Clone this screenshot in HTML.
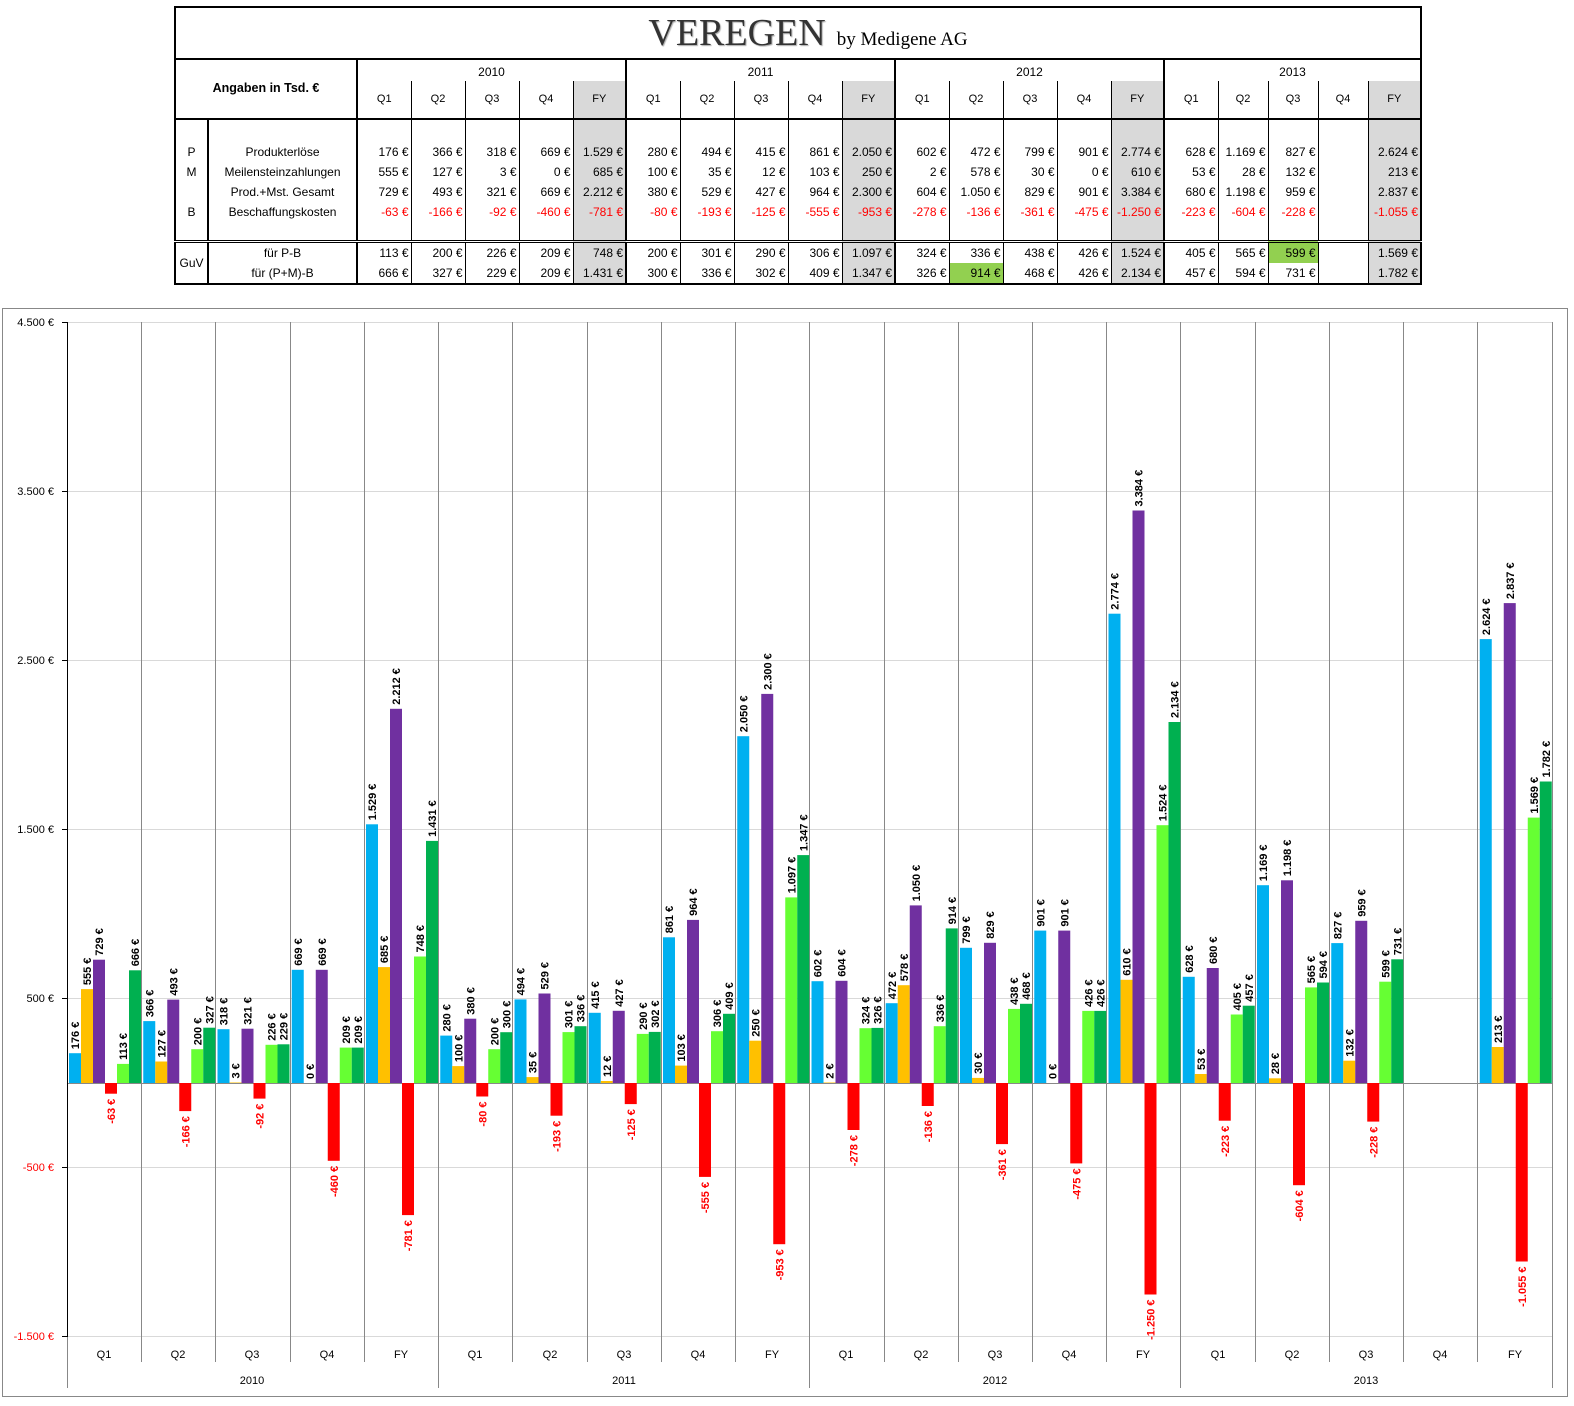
<!DOCTYPE html>
<html><head><meta charset="utf-8"><style>
html,body{margin:0;width:1574px;height:1406px;overflow:hidden}
body{background:#fff;position:relative;font-family:"Liberation Sans",Arial,sans-serif}
svg{position:absolute;left:0;top:0}
.c1{fill:#00b0f0}.c2{fill:#ffc000}.c3{fill:#7030a0}.c4{fill:#ff0000}.c5{fill:#66ff33}.c6{fill:#00b050}
text{font-family:"Liberation Sans",Arial,sans-serif}
.l{font-size:11px;font-weight:bold;fill:#000}
.n{font-size:11px;font-weight:bold;fill:#ff0000;text-anchor:end}
.ax{font-size:11px;text-anchor:end}
.ct{font-size:11px;text-anchor:middle}
table{position:absolute;left:174px;top:6px;border-collapse:collapse;table-layout:fixed;font-size:12px}
td{border:1px solid #000;padding:0;}
.t{border:2px solid #000}
.d{text-align:right;padding-right:2px;line-height:20px;vertical-align:top;padding-top:22px}
.g{background:#d9d9d9}
.r{color:#ff0000}
.q{font-size:11px;text-align:center;vertical-align:middle;padding-bottom:2px}
.yb{border-left:2px solid #000}
.hl{background:#92d050}
.gu td{line-height:20px}
</style></head><body>
<svg width="1574" height="1406">
<rect x="2.5" y="308.5" width="1565" height="1088" fill="#fff" stroke="#888"/>
<g stroke="#d9d9d9" stroke-width="1">
<line x1="67" y1="322.5" x2="1552" y2="322.5"/><line x1="67" y1="491.5" x2="1552" y2="491.5"/><line x1="67" y1="660.5" x2="1552" y2="660.5"/><line x1="67" y1="829.5" x2="1552" y2="829.5"/><line x1="67" y1="998.5" x2="1552" y2="998.5"/><line x1="67" y1="1167.5" x2="1552" y2="1167.5"/><line x1="67" y1="1336.5" x2="1552" y2="1336.5"/>
</g>
<g stroke="#888" stroke-width="1">
<line x1="141.5" y1="322" x2="141.5" y2="1362"/><line x1="215.5" y1="322" x2="215.5" y2="1362"/><line x1="290.5" y1="322" x2="290.5" y2="1362"/><line x1="364.5" y1="322" x2="364.5" y2="1362"/><line x1="438.5" y1="322" x2="438.5" y2="1388"/>
<line x1="512.5" y1="322" x2="512.5" y2="1362"/><line x1="587.5" y1="322" x2="587.5" y2="1362"/><line x1="661.5" y1="322" x2="661.5" y2="1362"/><line x1="735.5" y1="322" x2="735.5" y2="1362"/><line x1="809.5" y1="322" x2="809.5" y2="1388"/>
<line x1="884.5" y1="322" x2="884.5" y2="1362"/><line x1="958.5" y1="322" x2="958.5" y2="1362"/><line x1="1032.5" y1="322" x2="1032.5" y2="1362"/><line x1="1106.5" y1="322" x2="1106.5" y2="1362"/><line x1="1180.5" y1="322" x2="1180.5" y2="1388"/>
<line x1="1255.5" y1="322" x2="1255.5" y2="1362"/><line x1="1329.5" y1="322" x2="1329.5" y2="1362"/><line x1="1403.5" y1="322" x2="1403.5" y2="1362"/><line x1="1477.5" y1="322" x2="1477.5" y2="1362"/><line x1="1552.5" y1="322" x2="1552.5" y2="1388"/>
<line x1="67.5" y1="1337" x2="67.5" y2="1388"/>
<line x1="67" y1="1083.5" x2="1552" y2="1083.5"/>
</g>
<g stroke="#000"><line x1="67.5" y1="322" x2="67.5" y2="1337"/>
<line x1="62" y1="322.5" x2="67" y2="322.5"/><line x1="62" y1="491.5" x2="67" y2="491.5"/><line x1="62" y1="660.5" x2="67" y2="660.5"/><line x1="62" y1="829.5" x2="67" y2="829.5"/><line x1="62" y1="998.5" x2="67" y2="998.5"/><line x1="62" y1="1167.5" x2="67" y2="1167.5"/><line x1="62" y1="1336.5" x2="67" y2="1336.5"/></g>
<text class="ax" x="54" y="326">4.500 €</text><text class="ax" x="54" y="495">3.500 €</text><text class="ax" x="54" y="664">2.500 €</text><text class="ax" x="54" y="833">1.500 €</text><text class="ax" x="54" y="1002">500 €</text><text class="ax" x="54" y="1171" fill="#f00">-500 €</text><text class="ax" x="54" y="1340" fill="#f00">-1.500 €</text>
<g class="ct">
<text class="ct" x="104" y="1358">Q1</text><text class="ct" x="178" y="1358">Q2</text><text class="ct" x="252" y="1358">Q3</text><text class="ct" x="327" y="1358">Q4</text><text class="ct" x="401" y="1358">FY</text>
<text class="ct" x="475" y="1358">Q1</text><text class="ct" x="550" y="1358">Q2</text><text class="ct" x="624" y="1358">Q3</text><text class="ct" x="698" y="1358">Q4</text><text class="ct" x="772" y="1358">FY</text>
<text class="ct" x="846" y="1358">Q1</text><text class="ct" x="921" y="1358">Q2</text><text class="ct" x="995" y="1358">Q3</text><text class="ct" x="1069" y="1358">Q4</text><text class="ct" x="1143" y="1358">FY</text>
<text class="ct" x="1218" y="1358">Q1</text><text class="ct" x="1292" y="1358">Q2</text><text class="ct" x="1366" y="1358">Q3</text><text class="ct" x="1440" y="1358">Q4</text><text class="ct" x="1515" y="1358">FY</text>
<text class="ct" x="252" y="1384">2010</text><text class="ct" x="624" y="1384">2011</text><text class="ct" x="995" y="1384">2012</text><text class="ct" x="1366" y="1384">2013</text>
</g>

<g transform="translate(67,1083)">
<rect class="c1" x="2" y="-29.8" width="12" height="29.8"/><rect class="c2" x="14" y="-93.9" width="12" height="93.9"/><rect class="c3" x="26" y="-123.3" width="12" height="123.3"/><rect class="c4" x="38" y="0" width="12" height="10.7"/><rect class="c5" x="50" y="-19.1" width="12" height="19.1"/><rect class="c6" x="62" y="-112.7" width="12" height="112.7"/>
<text class="l" transform="translate(12,-33.8)rotate(-90)">176 €</text><text class="l" transform="translate(24,-97.9)rotate(-90)">555 €</text><text class="l" transform="translate(36,-127.3)rotate(-90)">729 €</text><text class="n" transform="translate(48,15.7)rotate(-90)">-63 €</text><text class="l" transform="translate(60,-23.1)rotate(-90)">113 €</text><text class="l" transform="translate(72,-116.7)rotate(-90)">666 €</text>
</g>
<g transform="translate(141.25,1083)">
<rect class="c1" x="2" y="-61.9" width="12" height="61.9"/><rect class="c2" x="14" y="-21.5" width="12" height="21.5"/><rect class="c3" x="26" y="-83.4" width="12" height="83.4"/><rect class="c4" x="38" y="0" width="12" height="28.1"/><rect class="c5" x="50" y="-33.8" width="12" height="33.8"/><rect class="c6" x="62" y="-55.3" width="12" height="55.3"/>
<text class="l" transform="translate(12,-65.9)rotate(-90)">366 €</text><text class="l" transform="translate(24,-25.5)rotate(-90)">127 €</text><text class="l" transform="translate(36,-87.4)rotate(-90)">493 €</text><text class="n" transform="translate(48,33.1)rotate(-90)">-166 €</text><text class="l" transform="translate(60,-37.8)rotate(-90)">200 €</text><text class="l" transform="translate(72,-59.3)rotate(-90)">327 €</text>
</g>
<g transform="translate(215.5,1083)">
<rect class="c1" x="2" y="-53.8" width="12" height="53.8"/><rect class="c2" x="14" y="-0.5" width="12" height="0.5"/><rect class="c3" x="26" y="-54.3" width="12" height="54.3"/><rect class="c4" x="38" y="0" width="12" height="15.6"/><rect class="c5" x="50" y="-38.2" width="12" height="38.2"/><rect class="c6" x="62" y="-38.7" width="12" height="38.7"/>
<text class="l" transform="translate(12,-57.8)rotate(-90)">318 €</text><text class="l" transform="translate(24,-4.5)rotate(-90)">3 €</text><text class="l" transform="translate(36,-58.3)rotate(-90)">321 €</text><text class="n" transform="translate(48,20.6)rotate(-90)">-92 €</text><text class="l" transform="translate(60,-42.2)rotate(-90)">226 €</text><text class="l" transform="translate(72,-42.7)rotate(-90)">229 €</text>
</g>
<g transform="translate(289.75,1083)">
<rect class="c1" x="2" y="-113.2" width="12" height="113.2"/><rect class="c3" x="26" y="-113.2" width="12" height="113.2"/><rect class="c4" x="38" y="0" width="12" height="77.8"/><rect class="c5" x="50" y="-35.4" width="12" height="35.4"/><rect class="c6" x="62" y="-35.4" width="12" height="35.4"/>
<text class="l" transform="translate(12,-117.2)rotate(-90)">669 €</text><text class="l" transform="translate(24,-4)rotate(-90)">0 €</text><text class="l" transform="translate(36,-117.2)rotate(-90)">669 €</text><text class="n" transform="translate(48,82.8)rotate(-90)">-460 €</text><text class="l" transform="translate(60,-39.4)rotate(-90)">209 €</text><text class="l" transform="translate(72,-39.4)rotate(-90)">209 €</text>
</g>
<g transform="translate(364,1083)">
<rect class="c1" x="2" y="-258.7" width="12" height="258.7"/><rect class="c2" x="14" y="-115.9" width="12" height="115.9"/><rect class="c3" x="26" y="-374.2" width="12" height="374.2"/><rect class="c4" x="38" y="0" width="12" height="132.1"/><rect class="c5" x="50" y="-126.5" width="12" height="126.5"/><rect class="c6" x="62" y="-242.1" width="12" height="242.1"/>
<text class="l" transform="translate(12,-262.7)rotate(-90)">1.529 €</text><text class="l" transform="translate(24,-119.9)rotate(-90)">685 €</text><text class="l" transform="translate(36,-378.2)rotate(-90)">2.212 €</text><text class="n" transform="translate(48,137.1)rotate(-90)">-781 €</text><text class="l" transform="translate(60,-130.5)rotate(-90)">748 €</text><text class="l" transform="translate(72,-246.1)rotate(-90)">1.431 €</text>
</g>
<g transform="translate(438.25,1083)">
<rect class="c1" x="2" y="-47.4" width="12" height="47.4"/><rect class="c2" x="14" y="-16.9" width="12" height="16.9"/><rect class="c3" x="26" y="-64.3" width="12" height="64.3"/><rect class="c4" x="38" y="0" width="12" height="13.5"/><rect class="c5" x="50" y="-33.8" width="12" height="33.8"/><rect class="c6" x="62" y="-50.8" width="12" height="50.8"/>
<text class="l" transform="translate(12,-51.4)rotate(-90)">280 €</text><text class="l" transform="translate(24,-20.9)rotate(-90)">100 €</text><text class="l" transform="translate(36,-68.3)rotate(-90)">380 €</text><text class="n" transform="translate(48,18.5)rotate(-90)">-80 €</text><text class="l" transform="translate(60,-37.8)rotate(-90)">200 €</text><text class="l" transform="translate(72,-54.8)rotate(-90)">300 €</text>
</g>
<g transform="translate(512.5,1083)">
<rect class="c1" x="2" y="-83.6" width="12" height="83.6"/><rect class="c2" x="14" y="-5.9" width="12" height="5.9"/><rect class="c3" x="26" y="-89.5" width="12" height="89.5"/><rect class="c4" x="38" y="0" width="12" height="32.7"/><rect class="c5" x="50" y="-50.9" width="12" height="50.9"/><rect class="c6" x="62" y="-56.8" width="12" height="56.8"/>
<text class="l" transform="translate(12,-87.6)rotate(-90)">494 €</text><text class="l" transform="translate(24,-9.9)rotate(-90)">35 €</text><text class="l" transform="translate(36,-93.5)rotate(-90)">529 €</text><text class="n" transform="translate(48,37.7)rotate(-90)">-193 €</text><text class="l" transform="translate(60,-54.9)rotate(-90)">301 €</text><text class="l" transform="translate(72,-60.8)rotate(-90)">336 €</text>
</g>
<g transform="translate(586.75,1083)">
<rect class="c1" x="2" y="-70.2" width="12" height="70.2"/><rect class="c2" x="14" y="-2" width="12" height="2"/><rect class="c3" x="26" y="-72.2" width="12" height="72.2"/><rect class="c4" x="38" y="0" width="12" height="21.1"/><rect class="c5" x="50" y="-49.1" width="12" height="49.1"/><rect class="c6" x="62" y="-51.1" width="12" height="51.1"/>
<text class="l" transform="translate(12,-74.2)rotate(-90)">415 €</text><text class="l" transform="translate(24,-6)rotate(-90)">12 €</text><text class="l" transform="translate(36,-76.2)rotate(-90)">427 €</text><text class="n" transform="translate(48,26.1)rotate(-90)">-125 €</text><text class="l" transform="translate(60,-53.1)rotate(-90)">290 €</text><text class="l" transform="translate(72,-55.1)rotate(-90)">302 €</text>
</g>
<g transform="translate(661,1083)">
<rect class="c1" x="2" y="-145.7" width="12" height="145.7"/><rect class="c2" x="14" y="-17.4" width="12" height="17.4"/><rect class="c3" x="26" y="-163.1" width="12" height="163.1"/><rect class="c4" x="38" y="0" width="12" height="93.9"/><rect class="c5" x="50" y="-51.8" width="12" height="51.8"/><rect class="c6" x="62" y="-69.2" width="12" height="69.2"/>
<text class="l" transform="translate(12,-149.7)rotate(-90)">861 €</text><text class="l" transform="translate(24,-21.4)rotate(-90)">103 €</text><text class="l" transform="translate(36,-167.1)rotate(-90)">964 €</text><text class="n" transform="translate(48,98.9)rotate(-90)">-555 €</text><text class="l" transform="translate(60,-55.8)rotate(-90)">306 €</text><text class="l" transform="translate(72,-73.2)rotate(-90)">409 €</text>
</g>
<g transform="translate(735.25,1083)">
<rect class="c1" x="2" y="-346.8" width="12" height="346.8"/><rect class="c2" x="14" y="-42.3" width="12" height="42.3"/><rect class="c3" x="26" y="-389.1" width="12" height="389.1"/><rect class="c4" x="38" y="0" width="12" height="161.2"/><rect class="c5" x="50" y="-185.6" width="12" height="185.6"/><rect class="c6" x="62" y="-227.9" width="12" height="227.9"/>
<text class="l" transform="translate(12,-350.8)rotate(-90)">2.050 €</text><text class="l" transform="translate(24,-46.3)rotate(-90)">250 €</text><text class="l" transform="translate(36,-393.1)rotate(-90)">2.300 €</text><text class="n" transform="translate(48,166.2)rotate(-90)">-953 €</text><text class="l" transform="translate(60,-189.6)rotate(-90)">1.097 €</text><text class="l" transform="translate(72,-231.9)rotate(-90)">1.347 €</text>
</g>
<g transform="translate(809.5,1083)">
<rect class="c1" x="2" y="-101.8" width="12" height="101.8"/><rect class="c2" x="14" y="-0.5" width="12" height="0.5"/><rect class="c3" x="26" y="-102.2" width="12" height="102.2"/><rect class="c4" x="38" y="0" width="12" height="47"/><rect class="c5" x="50" y="-54.8" width="12" height="54.8"/><rect class="c6" x="62" y="-55.1" width="12" height="55.1"/>
<text class="l" transform="translate(12,-105.8)rotate(-90)">602 €</text><text class="l" transform="translate(24,-4.3)rotate(-90)">2 €</text><text class="l" transform="translate(36,-106.2)rotate(-90)">604 €</text><text class="n" transform="translate(48,52)rotate(-90)">-278 €</text><text class="l" transform="translate(60,-58.8)rotate(-90)">324 €</text><text class="l" transform="translate(72,-59.1)rotate(-90)">326 €</text>
</g>
<g transform="translate(883.75,1083)">
<rect class="c1" x="2" y="-79.8" width="12" height="79.8"/><rect class="c2" x="14" y="-97.8" width="12" height="97.8"/><rect class="c3" x="26" y="-177.6" width="12" height="177.6"/><rect class="c4" x="38" y="0" width="12" height="23"/><rect class="c5" x="50" y="-56.8" width="12" height="56.8"/><rect class="c6" x="62" y="-154.6" width="12" height="154.6"/>
<text class="l" transform="translate(12,-83.8)rotate(-90)">472 €</text><text class="l" transform="translate(24,-101.8)rotate(-90)">578 €</text><text class="l" transform="translate(36,-181.6)rotate(-90)">1.050 €</text><text class="n" transform="translate(48,28)rotate(-90)">-136 €</text><text class="l" transform="translate(60,-60.8)rotate(-90)">336 €</text><text class="l" transform="translate(72,-158.6)rotate(-90)">914 €</text>
</g>
<g transform="translate(958,1083)">
<rect class="c1" x="2" y="-135.2" width="12" height="135.2"/><rect class="c2" x="14" y="-5.1" width="12" height="5.1"/><rect class="c3" x="26" y="-140.2" width="12" height="140.2"/><rect class="c4" x="38" y="0" width="12" height="61.1"/><rect class="c5" x="50" y="-74.1" width="12" height="74.1"/><rect class="c6" x="62" y="-79.2" width="12" height="79.2"/>
<text class="l" transform="translate(12,-139.2)rotate(-90)">799 €</text><text class="l" transform="translate(24,-9.1)rotate(-90)">30 €</text><text class="l" transform="translate(36,-144.2)rotate(-90)">829 €</text><text class="n" transform="translate(48,66.1)rotate(-90)">-361 €</text><text class="l" transform="translate(60,-78.1)rotate(-90)">438 €</text><text class="l" transform="translate(72,-83.2)rotate(-90)">468 €</text>
</g>
<g transform="translate(1032.25,1083)">
<rect class="c1" x="2" y="-152.4" width="12" height="152.4"/><rect class="c3" x="26" y="-152.4" width="12" height="152.4"/><rect class="c4" x="38" y="0" width="12" height="80.4"/><rect class="c5" x="50" y="-72.1" width="12" height="72.1"/><rect class="c6" x="62" y="-72.1" width="12" height="72.1"/>
<text class="l" transform="translate(12,-156.4)rotate(-90)">901 €</text><text class="l" transform="translate(24,-4)rotate(-90)">0 €</text><text class="l" transform="translate(36,-156.4)rotate(-90)">901 €</text><text class="n" transform="translate(48,85.4)rotate(-90)">-475 €</text><text class="l" transform="translate(60,-76.1)rotate(-90)">426 €</text><text class="l" transform="translate(72,-76.1)rotate(-90)">426 €</text>
</g>
<g transform="translate(1106.5,1083)">
<rect class="c1" x="2" y="-469.3" width="12" height="469.3"/><rect class="c2" x="14" y="-103.2" width="12" height="103.2"/><rect class="c3" x="26" y="-572.5" width="12" height="572.5"/><rect class="c4" x="38" y="0" width="12" height="211.5"/><rect class="c5" x="50" y="-257.8" width="12" height="257.8"/><rect class="c6" x="62" y="-361" width="12" height="361"/>
<text class="l" transform="translate(12,-473.3)rotate(-90)">2.774 €</text><text class="l" transform="translate(24,-107.2)rotate(-90)">610 €</text><text class="l" transform="translate(36,-576.5)rotate(-90)">3.384 €</text><text class="n" transform="translate(48,216.5)rotate(-90)">-1.250 €</text><text class="l" transform="translate(60,-261.8)rotate(-90)">1.524 €</text><text class="l" transform="translate(72,-365)rotate(-90)">2.134 €</text>
</g>
<g transform="translate(1180.75,1083)">
<rect class="c1" x="2" y="-106.2" width="12" height="106.2"/><rect class="c2" x="14" y="-9" width="12" height="9"/><rect class="c3" x="26" y="-115" width="12" height="115"/><rect class="c4" x="38" y="0" width="12" height="37.7"/><rect class="c5" x="50" y="-68.5" width="12" height="68.5"/><rect class="c6" x="62" y="-77.3" width="12" height="77.3"/>
<text class="l" transform="translate(12,-110.2)rotate(-90)">628 €</text><text class="l" transform="translate(24,-13)rotate(-90)">53 €</text><text class="l" transform="translate(36,-119)rotate(-90)">680 €</text><text class="n" transform="translate(48,42.7)rotate(-90)">-223 €</text><text class="l" transform="translate(60,-72.5)rotate(-90)">405 €</text><text class="l" transform="translate(72,-81.3)rotate(-90)">457 €</text>
</g>
<g transform="translate(1255,1083)">
<rect class="c1" x="2" y="-197.8" width="12" height="197.8"/><rect class="c2" x="14" y="-4.7" width="12" height="4.7"/><rect class="c3" x="26" y="-202.7" width="12" height="202.7"/><rect class="c4" x="38" y="0" width="12" height="102.2"/><rect class="c5" x="50" y="-95.6" width="12" height="95.6"/><rect class="c6" x="62" y="-100.5" width="12" height="100.5"/>
<text class="l" transform="translate(12,-201.8)rotate(-90)">1.169 €</text><text class="l" transform="translate(24,-8.7)rotate(-90)">28 €</text><text class="l" transform="translate(36,-206.7)rotate(-90)">1.198 €</text><text class="n" transform="translate(48,107.2)rotate(-90)">-604 €</text><text class="l" transform="translate(60,-99.6)rotate(-90)">565 €</text><text class="l" transform="translate(72,-104.5)rotate(-90)">594 €</text>
</g>
<g transform="translate(1329.25,1083)">
<rect class="c1" x="2" y="-139.9" width="12" height="139.9"/><rect class="c2" x="14" y="-22.3" width="12" height="22.3"/><rect class="c3" x="26" y="-162.2" width="12" height="162.2"/><rect class="c4" x="38" y="0" width="12" height="38.6"/><rect class="c5" x="50" y="-101.3" width="12" height="101.3"/><rect class="c6" x="62" y="-123.7" width="12" height="123.7"/>
<text class="l" transform="translate(12,-143.9)rotate(-90)">827 €</text><text class="l" transform="translate(24,-26.3)rotate(-90)">132 €</text><text class="l" transform="translate(36,-166.2)rotate(-90)">959 €</text><text class="n" transform="translate(48,43.6)rotate(-90)">-228 €</text><text class="l" transform="translate(60,-105.3)rotate(-90)">599 €</text><text class="l" transform="translate(72,-127.7)rotate(-90)">731 €</text>
</g>
<g transform="translate(1477.75,1083)">
<rect class="c1" x="2" y="-443.9" width="12" height="443.9"/><rect class="c2" x="14" y="-36" width="12" height="36"/><rect class="c3" x="26" y="-479.9" width="12" height="479.9"/><rect class="c4" x="38" y="0" width="12" height="178.5"/><rect class="c5" x="50" y="-265.4" width="12" height="265.4"/><rect class="c6" x="62" y="-301.5" width="12" height="301.5"/>
<text class="l" transform="translate(12,-447.9)rotate(-90)">2.624 €</text><text class="l" transform="translate(24,-40)rotate(-90)">213 €</text><text class="l" transform="translate(36,-483.9)rotate(-90)">2.837 €</text><text class="n" transform="translate(48,183.5)rotate(-90)">-1.055 €</text><text class="l" transform="translate(60,-269.4)rotate(-90)">1.569 €</text><text class="l" transform="translate(72,-305.5)rotate(-90)">1.782 €</text>
</g>
</svg>

<table>
<colgroup><col style="width:33px"><col style="width:149px">
<col style="width:54px"><col style="width:54px"><col style="width:54px"><col style="width:54px"><col style="width:53px">
<col style="width:54px"><col style="width:54px"><col style="width:54px"><col style="width:54px"><col style="width:53px">
<col style="width:54px"><col style="width:54px"><col style="width:54px"><col style="width:54px"><col style="width:53px">
<col style="width:54px"><col style="width:50px"><col style="width:50px"><col style="width:50px"><col style="width:53px"></colgroup>
<tr style="height:52px"><td class="t" colspan="22" style="text-align:center;font-family:'Liberation Serif',serif;padding-left:20px"><span style="font-size:38px;color:#333;font-weight:normal;text-shadow:1px 1px 1px #aaa">VEREGEN</span> <span style="font-size:19px;margin-left:8px">by Medigene AG</span></td></tr>
<tr style="height:22px"><td colspan="2" rowspan="2" style="border:2px solid #000;text-align:center;font-weight:bold;font-size:12.5px;padding-bottom:2px">Angaben in Tsd. €</td>
<td colspan="5" class="yb" style="text-align:center;border-bottom:0;border-top:2px solid #000;padding-top:2px">2010</td>
<td colspan="5" class="yb" style="text-align:center;border-bottom:0;border-top:2px solid #000;padding-top:2px">2011</td>
<td colspan="5" class="yb" style="text-align:center;border-bottom:0;border-top:2px solid #000;padding-top:2px">2012</td>
<td colspan="5" class="yb" style="text-align:center;border-bottom:0;border-top:2px solid #000;border-right:2px solid #000;padding-top:2px">2013</td></tr>
<tr style="height:38px">
<td class="q yb" style="border-top:0;border-bottom:2px solid #000">Q1</td><td class="q" style="border-top:0;border-bottom:2px solid #000">Q2</td><td class="q" style="border-top:0;border-bottom:2px solid #000">Q3</td><td class="q" style="border-top:0;border-bottom:2px solid #000">Q4</td><td class="q g" style="border-top:0;border-bottom:2px solid #000">FY</td>
<td class="q yb" style="border-top:0;border-bottom:2px solid #000">Q1</td><td class="q" style="border-top:0;border-bottom:2px solid #000">Q2</td><td class="q" style="border-top:0;border-bottom:2px solid #000">Q3</td><td class="q" style="border-top:0;border-bottom:2px solid #000">Q4</td><td class="q g" style="border-top:0;border-bottom:2px solid #000">FY</td>
<td class="q yb" style="border-top:0;border-bottom:2px solid #000">Q1</td><td class="q" style="border-top:0;border-bottom:2px solid #000">Q2</td><td class="q" style="border-top:0;border-bottom:2px solid #000">Q3</td><td class="q" style="border-top:0;border-bottom:2px solid #000">Q4</td><td class="q g" style="border-top:0;border-bottom:2px solid #000">FY</td>
<td class="q yb" style="border-top:0;border-bottom:2px solid #000">Q1</td><td class="q" style="border-top:0;border-bottom:2px solid #000">Q2</td><td class="q" style="border-top:0;border-bottom:2px solid #000">Q3</td><td class="q" style="border-top:0;border-bottom:2px solid #000">Q4</td><td class="q g" style="border-top:0;border-bottom:2px solid #000;border-right:2px solid #000">FY</td></tr>
<tr style="height:122px">
<td class="d" style="text-align:center;padding-right:0;border-left:2px solid #000;border-right:2px solid #000">P<br>M<br><br>B</td>
<td class="d" style="text-align:center;padding-right:0;border-right:2px solid #000">Produkterlöse<br>Meilensteinzahlungen<br>Prod.+Mst. Gesamt<br>Beschaffungskosten</td>
<td class="d yb">176 €<br>555 €<br>729 €<br><span class="r">-63 €</span></td><td class="d">366 €<br>127 €<br>493 €<br><span class="r">-166 €</span></td><td class="d">318 €<br>3 €<br>321 €<br><span class="r">-92 €</span></td><td class="d">669 €<br>0 €<br>669 €<br><span class="r">-460 €</span></td><td class="d g">1.529 €<br>685 €<br>2.212 €<br><span class="r">-781 €</span></td>
<td class="d yb">280 €<br>100 €<br>380 €<br><span class="r">-80 €</span></td><td class="d">494 €<br>35 €<br>529 €<br><span class="r">-193 €</span></td><td class="d">415 €<br>12 €<br>427 €<br><span class="r">-125 €</span></td><td class="d">861 €<br>103 €<br>964 €<br><span class="r">-555 €</span></td><td class="d g">2.050 €<br>250 €<br>2.300 €<br><span class="r">-953 €</span></td>
<td class="d yb">602 €<br>2 €<br>604 €<br><span class="r">-278 €</span></td><td class="d">472 €<br>578 €<br>1.050 €<br><span class="r">-136 €</span></td><td class="d">799 €<br>30 €<br>829 €<br><span class="r">-361 €</span></td><td class="d">901 €<br>0 €<br>901 €<br><span class="r">-475 €</span></td><td class="d g">2.774 €<br>610 €<br>3.384 €<br><span class="r">-1.250 €</span></td>
<td class="d yb">628 €<br>53 €<br>680 €<br><span class="r">-223 €</span></td><td class="d">1.169 €<br>28 €<br>1.198 €<br><span class="r">-604 €</span></td><td class="d">827 €<br>132 €<br>959 €<br><span class="r">-228 €</span></td><td class="d"></td><td class="d g" style="border-right:2px solid #000">2.624 €<br>213 €<br>2.837 €<br><span class="r">-1.055 €</span></td></tr>
<tr class="gu" style="height:22px">
<td rowspan="2" style="border-top:3px double #000;border-left:2px solid #000;border-bottom:2px solid #000;border-right:2px solid #000;text-align:center">GuV</td>
<td style="text-align:center;border-top:3px double #000;border-bottom:0;border-right:2px solid #000;vertical-align:bottom">für P-B</td>
<td class="yb" style="text-align:right;padding-right:2px;border-top:3px double #000;border-bottom:0;vertical-align:bottom">113 €</td><td style="text-align:right;padding-right:2px;border-top:3px double #000;border-bottom:0;vertical-align:bottom">200 €</td><td style="text-align:right;padding-right:2px;border-top:3px double #000;border-bottom:0;vertical-align:bottom">226 €</td><td style="text-align:right;padding-right:2px;border-top:3px double #000;border-bottom:0;vertical-align:bottom">209 €</td><td class="g" style="text-align:right;padding-right:2px;border-top:3px double #000;border-bottom:0;vertical-align:bottom">748 €</td>
<td class="yb" style="text-align:right;padding-right:2px;border-top:3px double #000;border-bottom:0;vertical-align:bottom">200 €</td><td style="text-align:right;padding-right:2px;border-top:3px double #000;border-bottom:0;vertical-align:bottom">301 €</td><td style="text-align:right;padding-right:2px;border-top:3px double #000;border-bottom:0;vertical-align:bottom">290 €</td><td style="text-align:right;padding-right:2px;border-top:3px double #000;border-bottom:0;vertical-align:bottom">306 €</td><td class="g" style="text-align:right;padding-right:2px;border-top:3px double #000;border-bottom:0;vertical-align:bottom">1.097 €</td>
<td class="yb" style="text-align:right;padding-right:2px;border-top:3px double #000;border-bottom:0;vertical-align:bottom">324 €</td><td style="text-align:right;padding-right:2px;border-top:3px double #000;border-bottom:0;vertical-align:bottom">336 €</td><td style="text-align:right;padding-right:2px;border-top:3px double #000;border-bottom:0;vertical-align:bottom">438 €</td><td style="text-align:right;padding-right:2px;border-top:3px double #000;border-bottom:0;vertical-align:bottom">426 €</td><td class="g" style="text-align:right;padding-right:2px;border-top:3px double #000;border-bottom:0;vertical-align:bottom">1.524 €</td>
<td class="yb" style="text-align:right;padding-right:2px;border-top:3px double #000;border-bottom:0;vertical-align:bottom">405 €</td><td style="text-align:right;padding-right:2px;border-top:3px double #000;border-bottom:0;vertical-align:bottom">565 €</td><td class="hl" style="text-align:right;padding-right:2px;border-top:3px double #000;border-bottom:0;vertical-align:bottom">599 €</td><td style="border-top:3px double #000;border-bottom:0"></td><td class="g" style="text-align:right;padding-right:2px;border-top:3px double #000;border-bottom:0;border-right:2px solid #000;vertical-align:bottom">1.569 €</td></tr>
<tr class="gu" style="height:20px">
<td style="text-align:center;border-top:0;border-bottom:2px solid #000;border-right:2px solid #000">für (P+M)-B</td>
<td class="yb" style="text-align:right;padding-right:2px;border-top:0;border-bottom:2px solid #000">666 €</td><td style="text-align:right;padding-right:2px;border-top:0;border-bottom:2px solid #000">327 €</td><td style="text-align:right;padding-right:2px;border-top:0;border-bottom:2px solid #000">229 €</td><td style="text-align:right;padding-right:2px;border-top:0;border-bottom:2px solid #000">209 €</td><td class="g" style="text-align:right;padding-right:2px;border-top:0;border-bottom:2px solid #000">1.431 €</td>
<td class="yb" style="text-align:right;padding-right:2px;border-top:0;border-bottom:2px solid #000">300 €</td><td style="text-align:right;padding-right:2px;border-top:0;border-bottom:2px solid #000">336 €</td><td style="text-align:right;padding-right:2px;border-top:0;border-bottom:2px solid #000">302 €</td><td style="text-align:right;padding-right:2px;border-top:0;border-bottom:2px solid #000">409 €</td><td class="g" style="text-align:right;padding-right:2px;border-top:0;border-bottom:2px solid #000">1.347 €</td>
<td class="yb" style="text-align:right;padding-right:2px;border-top:0;border-bottom:2px solid #000">326 €</td><td class="hl" style="text-align:right;padding-right:2px;border-top:0;border-bottom:2px solid #000">914 €</td><td style="text-align:right;padding-right:2px;border-top:0;border-bottom:2px solid #000">468 €</td><td style="text-align:right;padding-right:2px;border-top:0;border-bottom:2px solid #000">426 €</td><td class="g" style="text-align:right;padding-right:2px;border-top:0;border-bottom:2px solid #000">2.134 €</td>
<td class="yb" style="text-align:right;padding-right:2px;border-top:0;border-bottom:2px solid #000">457 €</td><td style="text-align:right;padding-right:2px;border-top:0;border-bottom:2px solid #000">594 €</td><td style="text-align:right;padding-right:2px;border-top:0;border-bottom:2px solid #000">731 €</td><td style="border-top:0;border-bottom:2px solid #000"></td><td class="g" style="text-align:right;padding-right:2px;border-top:0;border-bottom:2px solid #000;border-right:2px solid #000">1.782 €</td></tr>
</table>
</body></html>
